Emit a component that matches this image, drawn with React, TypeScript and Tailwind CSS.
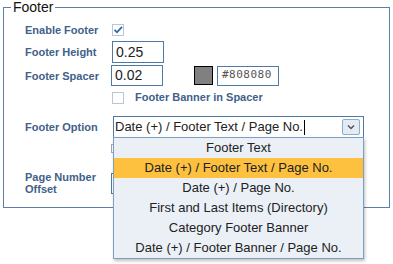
const options = [
  "Footer Text",
  "Date (+) / Footer Text / Page No.",
  "Date (+) / Page No.",
  "First and Last Items (Directory)",
  "Category Footer Banner",
  "Date (+) / Footer Banner / Page No.",
];

function CheckBox({ checked }: { checked?: boolean }) {
  return (
    <svg width="12" height="12" viewBox="0 0 12 12" className="block">
      <rect x="0.5" y="0.5" width="11" height="11" fill="#fff" stroke="#b8c6d6" />
      {checked && (
        <path d="M2.5 5.8 L5 8.3 L10 2.8" fill="none" stroke="#2f6aa8" strokeWidth="1.8" />
      )}
    </svg>
  );
}

function Label({ children }: { children: React.ReactNode }) {
  return (
    <div className="w-[87px] shrink-0 text-[11px] font-bold leading-[12px] text-[#41618a]">
      {children}
    </div>
  );
}

export default function App() {
  return (
    <div className="h-[264px] w-[393px] bg-white font-['Liberation_Sans',Arial,sans-serif] text-[#222]">
      <fieldset className="mx-[3px] h-[208px] w-[387px] border border-[#5a80aa] p-0">
        <legend className="ml-[7px] px-[2px] text-[14px] leading-[14px] text-[#111]">Footer</legend>
        <div className="relative pl-[21px]">
          <div className="mt-[9px] flex h-[14px] items-center">
            <Label>Enable Footer</Label>
            <CheckBox checked />
          </div>
          <div className="mt-[4px] flex h-[22px] items-center">
            <Label>Footer Height</Label>
            <div className="flex h-[22px] w-[52px] items-center border border-[#4f79a6] px-[3px] text-[14px]">
              0.25
            </div>
          </div>
          <div className="mt-[2px] flex h-[21px] items-center">
            <Label>Footer Spacer</Label>
            <div className="-ml-[1px] flex h-[21px] w-[52px] items-center border border-[#4f79a6] px-[3px] text-[14px]">
              0.02
            </div>
            <div className="ml-[31px] h-[19px] w-[19px] border border-black bg-[#808080]" />
            <div className="ml-[4px] flex h-[20px] w-[62px] items-center border border-[#4f79a6] px-[4px] font-['DejaVu_Sans_Mono',monospace] text-[11px] tracking-[0.5px] text-[#555]">
              #808080
            </div>
          </div>
          <div className="mt-[5px] flex h-[13px] items-center">
            <div className="w-[87px]" />
            <CheckBox />
            <span className="ml-[11px] text-[11px] font-bold text-[#41618a]">Footer Banner in Spacer</span>
          </div>
          <div className="mt-[12px] flex h-[22px] items-center">
            <Label>Footer Option</Label>
            <div className="relative ml-[1px] flex h-[22px] w-[251px] items-center border border-[#4f79a6] bg-white pl-[1px] text-[13px]">
              <span>Date (+) / Footer Text / Page No.</span>
              <span className="ml-[1px] h-[15px] w-px bg-black" />
              <div className="absolute right-[3px] top-[2px] flex h-[16px] w-[18px] items-center justify-center rounded-[2px] border border-[#8eabc9] bg-[#e3ebf4]">
                <svg width="8" height="6" viewBox="0 0 8 6">
                  <path d="M1 1.5 L4 4.5 L7 1.5" fill="none" stroke="#555" strokeWidth="1.5" />
                </svg>
              </div>
              <div className="absolute left-[-1px] top-[20px] z-10 w-[251px] border border-[#7f9fc2] bg-[#ebf0f7] shadow-[1px_2px_3px_rgba(0,0,0,0.25)]">
                {options.map((o, i) => (
                  <div
                    key={o}
                    className={
                      "flex h-[20px] items-center justify-center text-[13px] " +
                      (i === 1 ? "bg-[#fdc13f]" : "")
                    }
                  >
                    {o}
                  </div>
                ))}
              </div>
            </div>
          </div>
          <div className="mt-[5px] flex h-[10px] items-center">
            <div className="w-[86px]" />
            <div className="h-[9px] w-[10px] border border-[#9ab]" />
          </div>
          <div className="mt-[18px] flex items-center">
            <Label>
              Page Number
              <br />
              Offset
            </Label>
            <div className="-ml-[1px] h-[21px] w-[52px] border border-[#4f79a6]" />
          </div>
        </div>
      </fieldset>
    </div>
  );
}
